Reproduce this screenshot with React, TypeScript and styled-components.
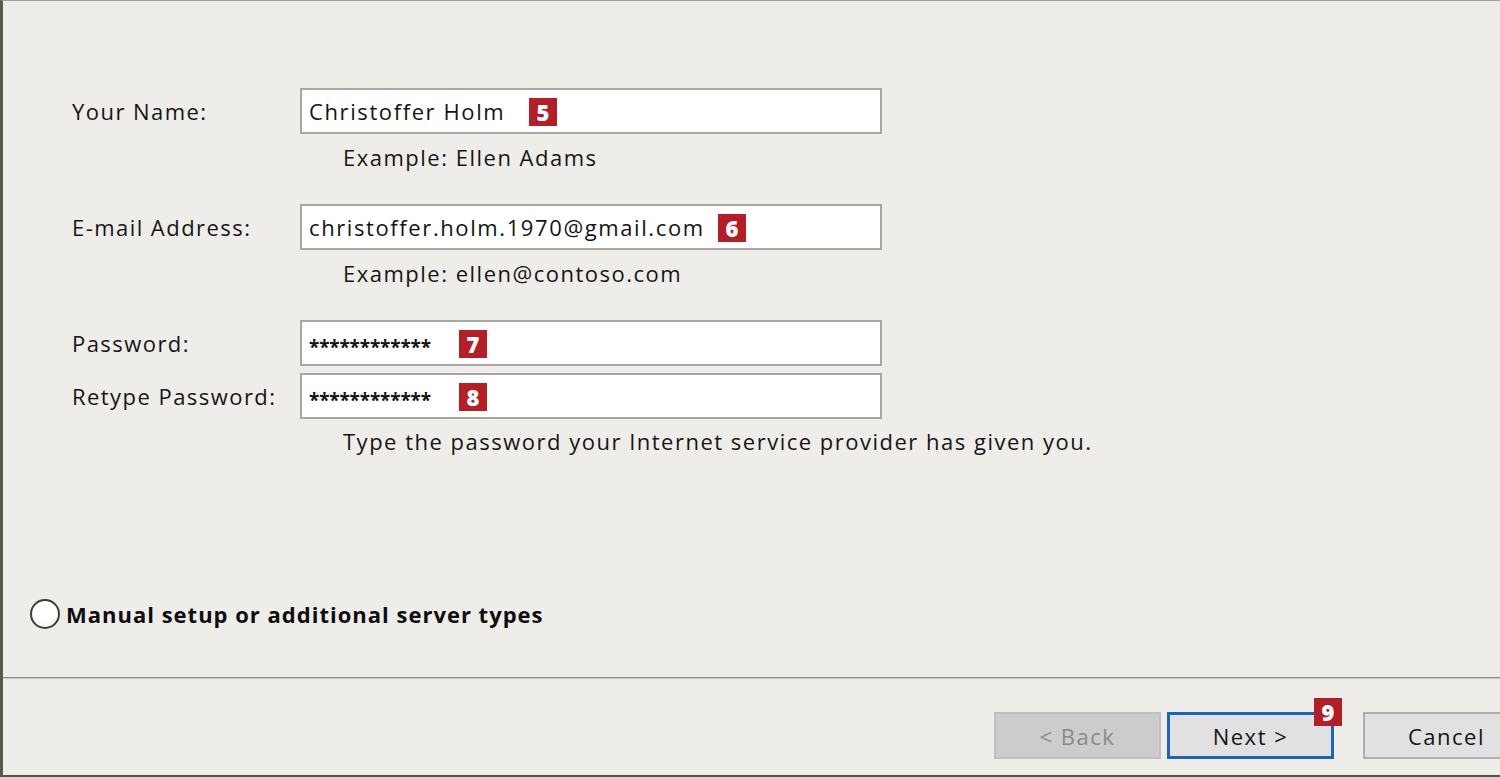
import React from "react";
import styled, { createGlobalStyle } from "styled-components";

const Global = createGlobalStyle`
  html, body { margin: 0; padding: 0; background: #eeedea; }
  body { font-family: "Open Sans", "Noto Sans", sans-serif; }
`;

const Window = styled.div`
  width: 1500px;
  height: 777px;
  box-sizing: border-box;
  background: #eeedea;
  border-top: 1px solid #a19f9b;
  border-left: 3px solid #5d584f;
  border-bottom: 2px solid #57534b;
  display: flex;
  flex-direction: column;
  overflow: hidden;
  color: #161616;
`;

const Main = styled.div`
  flex: 1;
  display: flex;
  flex-direction: column;
  padding-top: 87px;
`;

const FieldRow = styled.div<{ $mt?: number }>`
  display: flex;
  align-items: center;
  height: 46px;
  margin-top: ${(p) => p.$mt ?? 0}px;
`;

const Label = styled.div`
  width: 297px;
  box-sizing: border-box;
  padding-left: 69px;
  font-size: 22px;
  letter-spacing: 1.45px;
  white-space: nowrap;
`;

const InputBox = styled.div`
  position: relative;
  width: 582px;
  height: 46px;
  box-sizing: border-box;
  background: #ffffff;
  border: 2px solid #a7a7a5;
  display: flex;
  align-items: center;
  padding-left: 7px;
  font-size: 22px;
  letter-spacing: 1.6px;
  color: #141414;
`;

const Stars = styled.span`
  font-size: 19px;
  font-weight: 700;
  letter-spacing: -0.2px;
  line-height: 1;
  margin-top: 9px;
`;

const Badge = styled.span<{ $left: number; $top?: number }>`
  position: absolute;
  left: ${(p) => p.$left}px;
  top: ${(p) => p.$top ?? 8}px;
  width: 28px;
  height: 28px;
  background: #b21f27;
  color: #ffffff;
  font-family: "Open Sans", sans-serif;
  font-weight: 800;
  font-size: 22px;
  letter-spacing: 0;
  line-height: 28px;
  text-align: center;
`;

const Hint = styled.div<{ $mt: number }>`
  margin-top: ${(p) => p.$mt}px;
  padding-left: 340px;
  height: 24px;
  line-height: 24px;
  font-size: 22px;
  letter-spacing: 1.5px;
  white-space: nowrap;
`;

const RadioRow = styled.label`
  display: flex;
  align-items: center;
  margin-top: 146px;
  padding-left: 27px;
  height: 30px;
`;

const RadioCircle = styled.span`
  width: 30px;
  height: 30px;
  box-sizing: border-box;
  border-radius: 50%;
  border: 2px solid #3c3c3c;
  background: radial-gradient(circle at 50% 40%, #ffffff 55%, #e4e4e4 100%);
  margin-right: 6px;
`;

const RadioText = styled.span`
  font-weight: 700;
  font-size: 22px;
  letter-spacing: 1px;
  color: #0e0e0e;
  white-space: nowrap;
`;

const Footer = styled.div`
  height: 98px;
  box-sizing: border-box;
  border-top: 1px solid #8e8d8a;
  box-shadow: inset 0 1px 0 #c9c8c5;
  display: flex;
  align-items: flex-start;
  padding-top: 34px;
  padding-left: 991px;
`;

const Button = styled.button<{ $variant?: "disabled" | "default" | "normal"; $ml?: number }>`
  position: relative;
  flex: none;
  width: 167px;
  height: 47px;
  box-sizing: border-box;
  margin-left: ${(p) => p.$ml ?? 0}px;
  font-family: "Open Sans", "Noto Sans", sans-serif;
  font-size: 22px;
  letter-spacing: 1.5px;
  padding: 0;
  background: ${(p) => (p.$variant === "disabled" ? "#cccccc" : "#e1e1e1")};
  color: ${(p) => (p.$variant === "disabled" ? "#8b8b8b" : "#151515")};
  border: ${(p) =>
    p.$variant === "default"
      ? "3px solid #1f64b2"
      : p.$variant === "disabled"
      ? "2px solid #c0c0c0"
      : "2px solid #adadad"};
`;

type FieldProps = {
  label: string;
  mt?: number;
  badge: string;
  badgeLeft: number;
  children: React.ReactNode;
};

const Field = ({ label, mt, badge, badgeLeft, children }: FieldProps) => (
  <FieldRow $mt={mt}>
    <Label>{label}</Label>
    <InputBox>
      {children}
      <Badge $left={badgeLeft}>{badge}</Badge>
    </InputBox>
  </FieldRow>
);

export default function App() {
  return (
    <>
      <Global />
      <Window>
        <Main>
          <Field label="Your Name:" badge="5" badgeLeft={227}>
            Christoffer Holm
          </Field>
          <Hint $mt={11}>Example: Ellen Adams</Hint>
          <Field label="E-mail Address:" mt={35} badge="6" badgeLeft={416}>
            christoffer.holm.1970@gmail.com
          </Field>
          <Hint $mt={11}>Example: ellen@contoso.com</Hint>
          <Field label="Password:" mt={35} badge="7" badgeLeft={157}>
            <Stars>************</Stars>
          </Field>
          <Field label="Retype Password:" mt={7} badge="8" badgeLeft={157}>
            <Stars>************</Stars>
          </Field>
          <Hint $mt={10}>Type the password your Internet service provider has given you.</Hint>
          <RadioRow>
            <RadioCircle />
            <RadioText>Manual setup or additional server types</RadioText>
          </RadioRow>
        </Main>
        <Footer>
          <Button $variant="disabled" disabled>
            &lt; Back
          </Button>
          <Button $variant="default" $ml={6}>
            Next &gt;
            <Badge $left={144} $top={-17}>9</Badge>
          </Button>
          <Button $variant="normal" $ml={29}>
            Cancel
          </Button>
        </Footer>
      </Window>
    </>
  );
}
